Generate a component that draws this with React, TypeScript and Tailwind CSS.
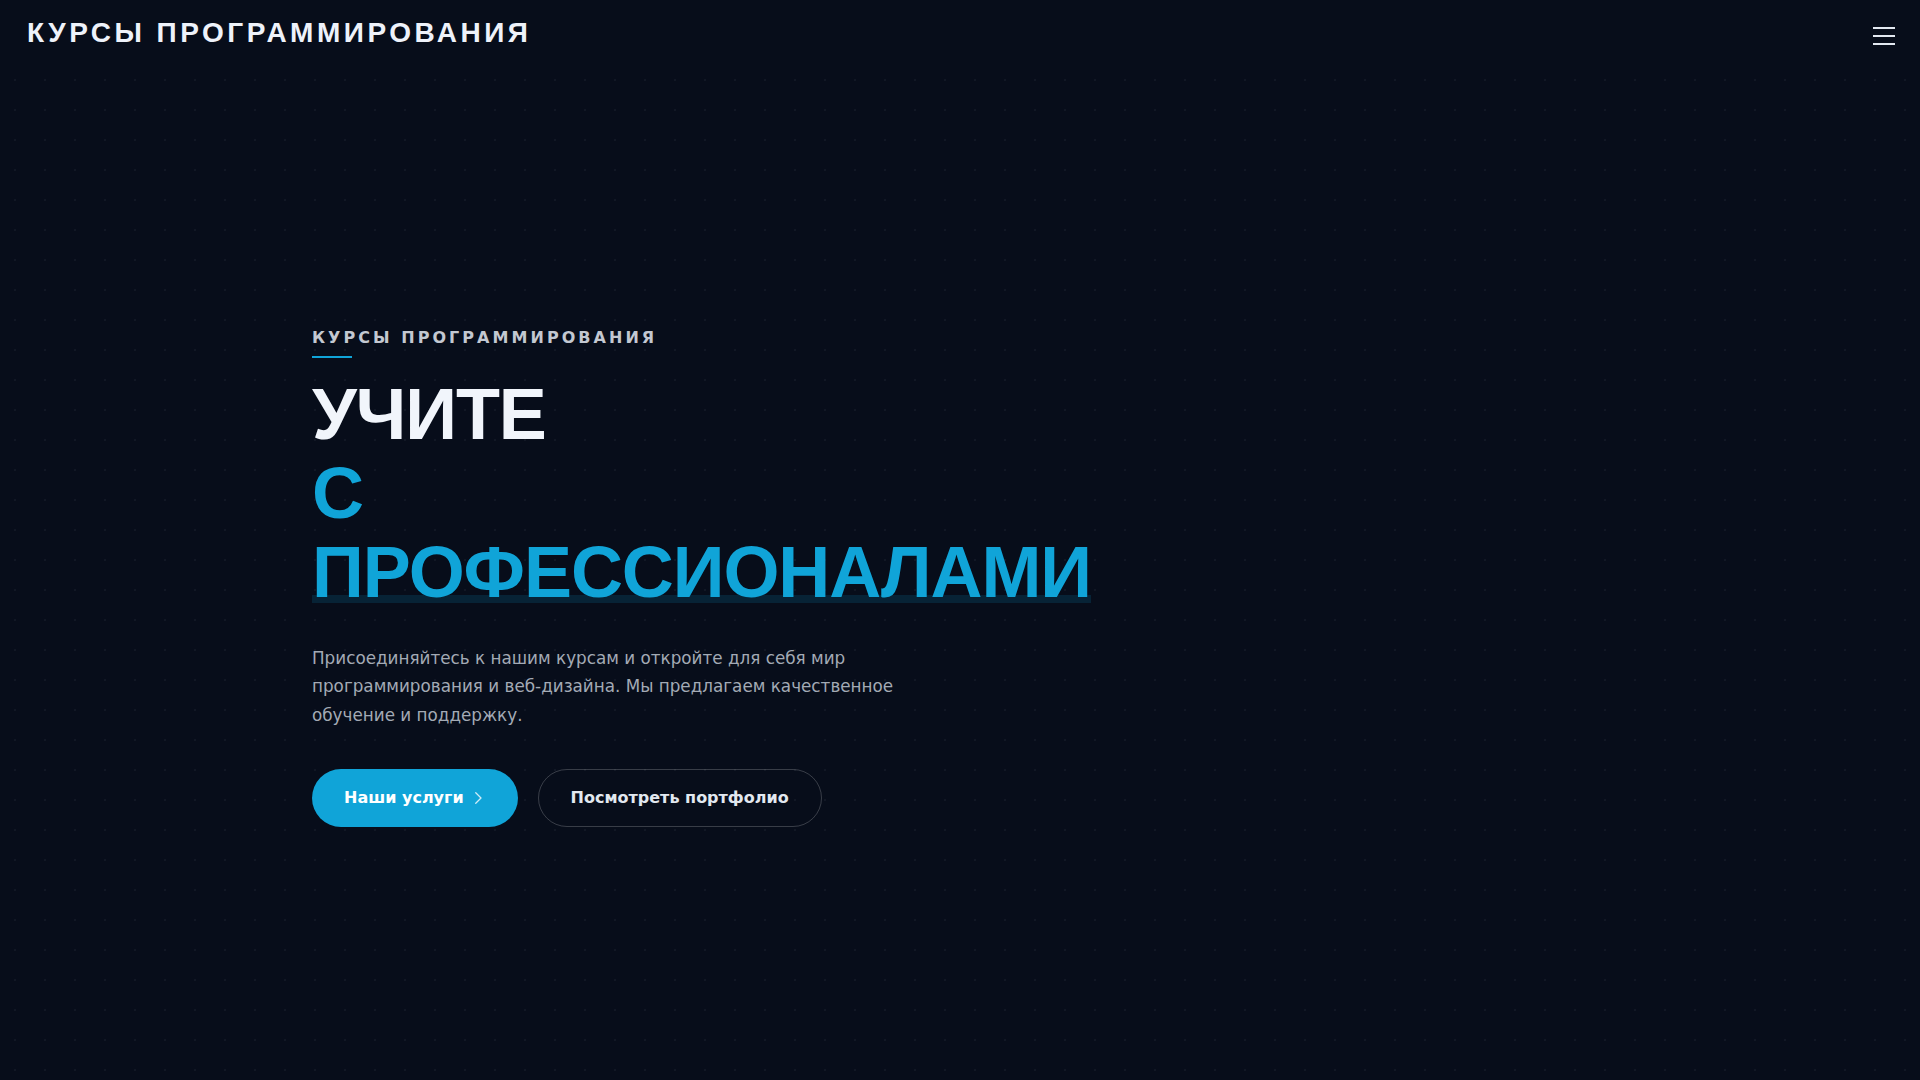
import React from "react";

export default function App() {
  return (
    <div className="flex min-h-screen flex-col bg-[#070d1a] bg-[radial-gradient(circle,rgba(148,163,184,0.07)_1px,transparent_1.5px)] bg-[size:30px_30px] bg-[position:0_5px] font-['DejaVu_Sans',sans-serif] text-slate-100">
      <header className="flex h-[68px] items-center justify-between bg-[#070d1a] pl-[27px] pr-[25px]">
        <div className="-mt-[2px] font-['Liberation_Sans',Arial,sans-serif] text-[28px] font-bold leading-none tracking-[0.125em] text-[#eef2fa]">
          КУРСЫ ПРОГРАММИРОВАНИЯ
        </div>
        <button aria-label="Меню" className="mt-[4px] flex w-[22px] flex-col gap-[6px]">
          <span className="block h-[2px] w-full bg-slate-200" />
          <span className="block h-[2px] w-full bg-slate-200" />
          <span className="block h-[2px] w-full bg-slate-200" />
        </button>
      </header>

      <main className="flex flex-1 items-center pt-[5px]">
        <div className="mx-auto w-full max-w-[1296px]">
          <div className="inline-flex flex-col">
            <span className="text-base font-bold uppercase leading-6 tracking-[0.19em] text-[#c3c8d1]">
              КУРСЫ ПРОГРАММИРОВАНИЯ
            </span>
            <span className="mt-[6px] block h-[2px] w-10 bg-[#10a4d8]" />
          </div>

          <h1 className="mt-[17px] font-['Liberation_Sans',Arial,sans-serif] text-[72px] font-bold leading-[1.1] tracking-[-0.015em]">
            <span className="block text-[#f1f5fb]">УЧИТЕ</span>
            <span className="block text-[#10a4d8]">С</span>
            <span className="relative inline-block text-[#10a4d8]">
              <span className="absolute bottom-[10px] left-0 right-0 h-2 bg-[#10a4d8]/15" />
              <span className="relative">ПРОФЕССИОНАЛАМИ</span>
            </span>
          </h1>

          <p className="mt-[31px] max-w-[600px] text-[16.8px] leading-[28.8px] text-[#a3aab5]">
            Присоединяйтесь к нашим курсам и откройте для себя мир программирования и веб-дизайна. Мы предлагаем качественное обучение и поддержку.
          </p>

          <div className="mt-[39px] flex gap-5">
            <button className="inline-flex items-center gap-[5px] rounded-full border border-transparent bg-[#10a4d8] py-4 pl-[31px] pr-[30px] text-base font-bold leading-6 text-white">
              Наши услуги
              <svg width="18" height="18" viewBox="0 0 24 24" fill="none" stroke="currentColor" strokeWidth="1.7" strokeLinecap="round" strokeLinejoin="round" className="opacity-80">
                <path d="M9 5l7 7-7 7" />
              </svg>
            </button>
            <button className="inline-flex items-center rounded-full border border-white/20 px-8 py-4 text-base font-bold leading-6 text-slate-200">
              Посмотреть портфолио
            </button>
          </div>
        </div>
      </main>
    </div>
  );
}
